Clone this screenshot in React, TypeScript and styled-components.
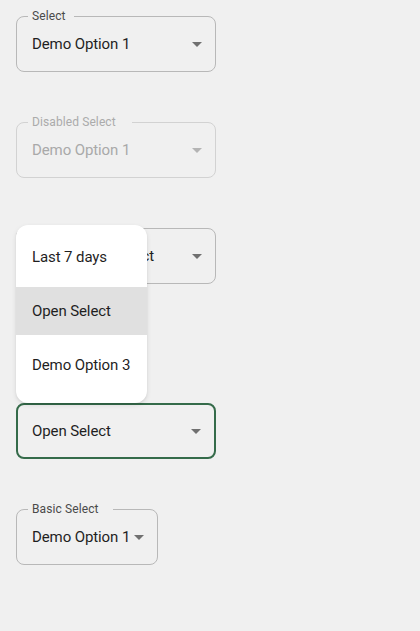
import React from 'react'
import styled, { createGlobalStyle } from 'styled-components'

const GlobalStyle = createGlobalStyle`
  html, body {
    margin: 0;
    padding: 0;
    background: #f0f0f0;
    font-family: Roboto, "Noto Sans", sans-serif;
  }
`

const Page = styled.div`
  position: relative;
  display: flex;
  flex-direction: column;
  align-items: flex-start;
  gap: 50px;
  padding: 16px;
  min-height: 631px;
  box-sizing: border-box;
`

const Field = styled.div<{ $width?: number; $focused?: boolean; $disabled?: boolean; $offset?: number }>`
  position: relative;
  box-sizing: border-box;
  width: ${p => (p.$width ? `${p.$width}px` : 'auto')};
  height: 56px;
  margin-top: ${p => p.$offset ?? 0}px;
  display: flex;
  align-items: center;
  padding: 0 27px 0 ${p => (p.$focused ? 14 : 15)}px;
  border: ${p => (p.$focused ? '2px solid #356b4a' : p.$disabled ? '1px solid #d2d2d2' : '1px solid #b8b8b8')};
  border-radius: 8px;
  color: ${p => (p.$disabled ? '#a9a9a9' : '#1f1f1f')};
  font-size: 15px;
  letter-spacing: -0.1px;
`

const FieldLabel = styled.span<{ $disabled?: boolean; $notch: number }>`
  position: absolute;
  top: -8px;
  left: 11px;
  padding: 0 ${p => p.$notch}px 0 4px;
  background: #f0f0f0;
  font-size: 12px;
  line-height: 15px;
  letter-spacing: 0.1px;
  color: ${p => (p.$disabled ? '#ababab' : '#4a4a4a')};
`

const Value = styled.span`
  white-space: nowrap;
`

const Arrow = styled.svg<{ $disabled?: boolean }>`
  position: absolute;
  right: 6px;
  top: 50%;
  width: 24px;
  height: 24px;
  margin-top: -12px;
  fill: ${p => (p.$disabled ? '#b4b4b4' : '#707070')};
`

const Menu = styled.ul`
  position: absolute;
  top: 225px;
  left: 16px;
  width: 131px;
  margin: 0;
  padding: 8px 0 14px;
  list-style: none;
  display: flex;
  flex-direction: column;
  gap: 6px;
  background: #ffffff;
  border-radius: 12px;
  box-shadow: 0 2px 5px rgba(0, 0, 0, 0.1), 0 1px 2px rgba(0, 0, 0, 0.06);
  z-index: 10;
`

const MenuItem = styled.li<{ $active?: boolean }>`
  height: 48px;
  display: flex;
  align-items: center;
  padding: 0 16px;
  font-size: 15px;
  letter-spacing: -0.1px;
  color: #1f1f1f;
  white-space: nowrap;
  background: ${p => (p.$active ? '#e0e0e0' : 'transparent')};
`

const DropIcon = ({ disabled }: { disabled?: boolean }) => (
  <Arrow $disabled={disabled} viewBox="0 0 24 24">
    <path d="M7 10l5 5 5-5z" />
  </Arrow>
)

interface SelectProps {
  label?: string
  value: string
  width?: number
  notch?: number
  focused?: boolean
  disabled?: boolean
  offset?: number
}

const SelectField: React.FC<SelectProps> = ({ label, value, width, notch = 8, focused, disabled, offset }) => (
  <Field $width={width} $focused={focused} $disabled={disabled} $offset={offset}>
    {label && (
      <FieldLabel $disabled={disabled} $notch={notch}>
        {label}
      </FieldLabel>
    )}
    <Value>{value}</Value>
    <DropIcon disabled={disabled} />
  </Field>
)

export default function App() {
  return (
    <>
      <GlobalStyle />
      <Page>
        <SelectField label="Select" value="Demo Option 1" width={200} notch={8} />
        <SelectField label="Disabled Select" value="Demo Option 1" width={200} notch={16} disabled />
        <SelectField value="Placeholder Select" width={200} />
        <SelectField value="Open Select" width={200} focused offset={69} />
        <SelectField label="Basic Select" value="Demo Option 1" notch={14} />
        <Menu>
          <MenuItem>Last 7 days</MenuItem>
          <MenuItem $active>Open Select</MenuItem>
          <MenuItem>Demo Option 3</MenuItem>
        </Menu>
      </Page>
    </>
  )
}
